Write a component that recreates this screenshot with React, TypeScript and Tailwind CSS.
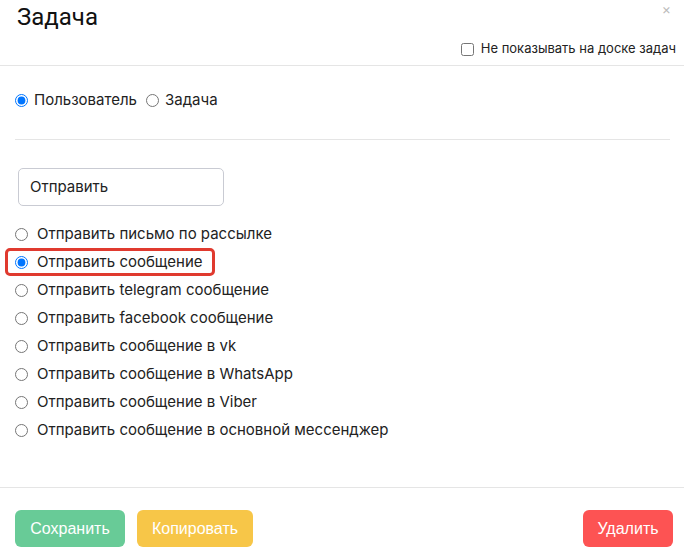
import React from "react";

const items = [
  "Отправить письмо по рассылке",
  "Отправить сообщение",
  "Отправить telegram сообщение",
  "Отправить facebook сообщение",
  "Отправить сообщение в vk",
  "Отправить сообщение в WhatsApp",
  "Отправить сообщение в Viber",
  "Отправить сообщение в основной мессенджер",
];

export default function App() {
  return (
    <div className="w-[684px] h-[553px] bg-white overflow-hidden text-[#222] font-['Inter','Noto_Sans',sans-serif]">
      <div className="relative h-[66px] border-b border-[#e5e5e5]">
        <div className="pl-[17px] pt-[1px] text-[24px] leading-[32px] text-[#111] font-['Roboto','Inter',sans-serif]">Задача</div>
        <div className="absolute top-[1px] right-[13px] text-[14px] leading-[16px] text-[#bbb]">×</div>
        <div className="flex justify-end items-center pr-[8px] mt-[7px] h-[18px]">
          <input type="checkbox" className="w-[13px] h-[13px] m-0 mr-[7px]" />
          <span className="text-[13px] text-[#222]">Не показывать на доске задач</span>
        </div>
      </div>
      <div className="pl-[15px] pr-[14px]">
        <div className="pt-[25px] pb-[29px] border-b border-[#e5e5e5] flex items-center h-[74px] box-border">
          <label className="flex items-center">
            <input type="radio" name="t" defaultChecked className="w-[13px] h-[13px] m-0 mr-[6px]" />
            <span className="text-[15px]">Пользователь</span>
          </label>
          <label className="flex items-center ml-[9px]">
            <input type="radio" name="t" className="w-[13px] h-[13px] m-0 mr-[6px]" />
            <span className="text-[15px]">Задача</span>
          </label>
        </div>
        <div className="mt-[28px] ml-[3px] w-[206px] h-[38px] border border-[#c9cbd3] rounded-[5px] flex items-center px-[11px] text-[15px]">
          Отправить
        </div>
        <div className="mt-[14px] flex flex-col">
          {items.map((t, i) => (
            <label key={t} className="relative flex items-center h-[28px]">
              <input type="radio" name="a" defaultChecked={i === 1} className="w-[13px] h-[13px] m-0 mr-[9px]" />
              <span className="text-[15px]">{t}</span>
              {i === 1 && (
                <div className="absolute left-[-10px] top-0 w-[210px] h-[28px] border-[3px] border-[#e03a2f] rounded-[5px]" />
              )}
            </label>
          ))}
        </div>
      </div>
      <div className="mt-[43px] border-t border-[#e5e5e5] pt-[22px] pl-[15px] pr-[11px] flex font-['Liberation_Sans','Arial',sans-serif] text-[16px] text-white">
        <button className="w-[110px] h-[37px] rounded-[6px] bg-[#68cb97]">Сохранить</button>
        <button className="ml-[12px] w-[116px] h-[37px] rounded-[6px] bg-[#f7c648]">Копировать</button>
        <button className="ml-auto w-[90px] h-[37px] rounded-[6px] bg-[#fd5353]">Удалить</button>
      </div>
    </div>
  );
}
